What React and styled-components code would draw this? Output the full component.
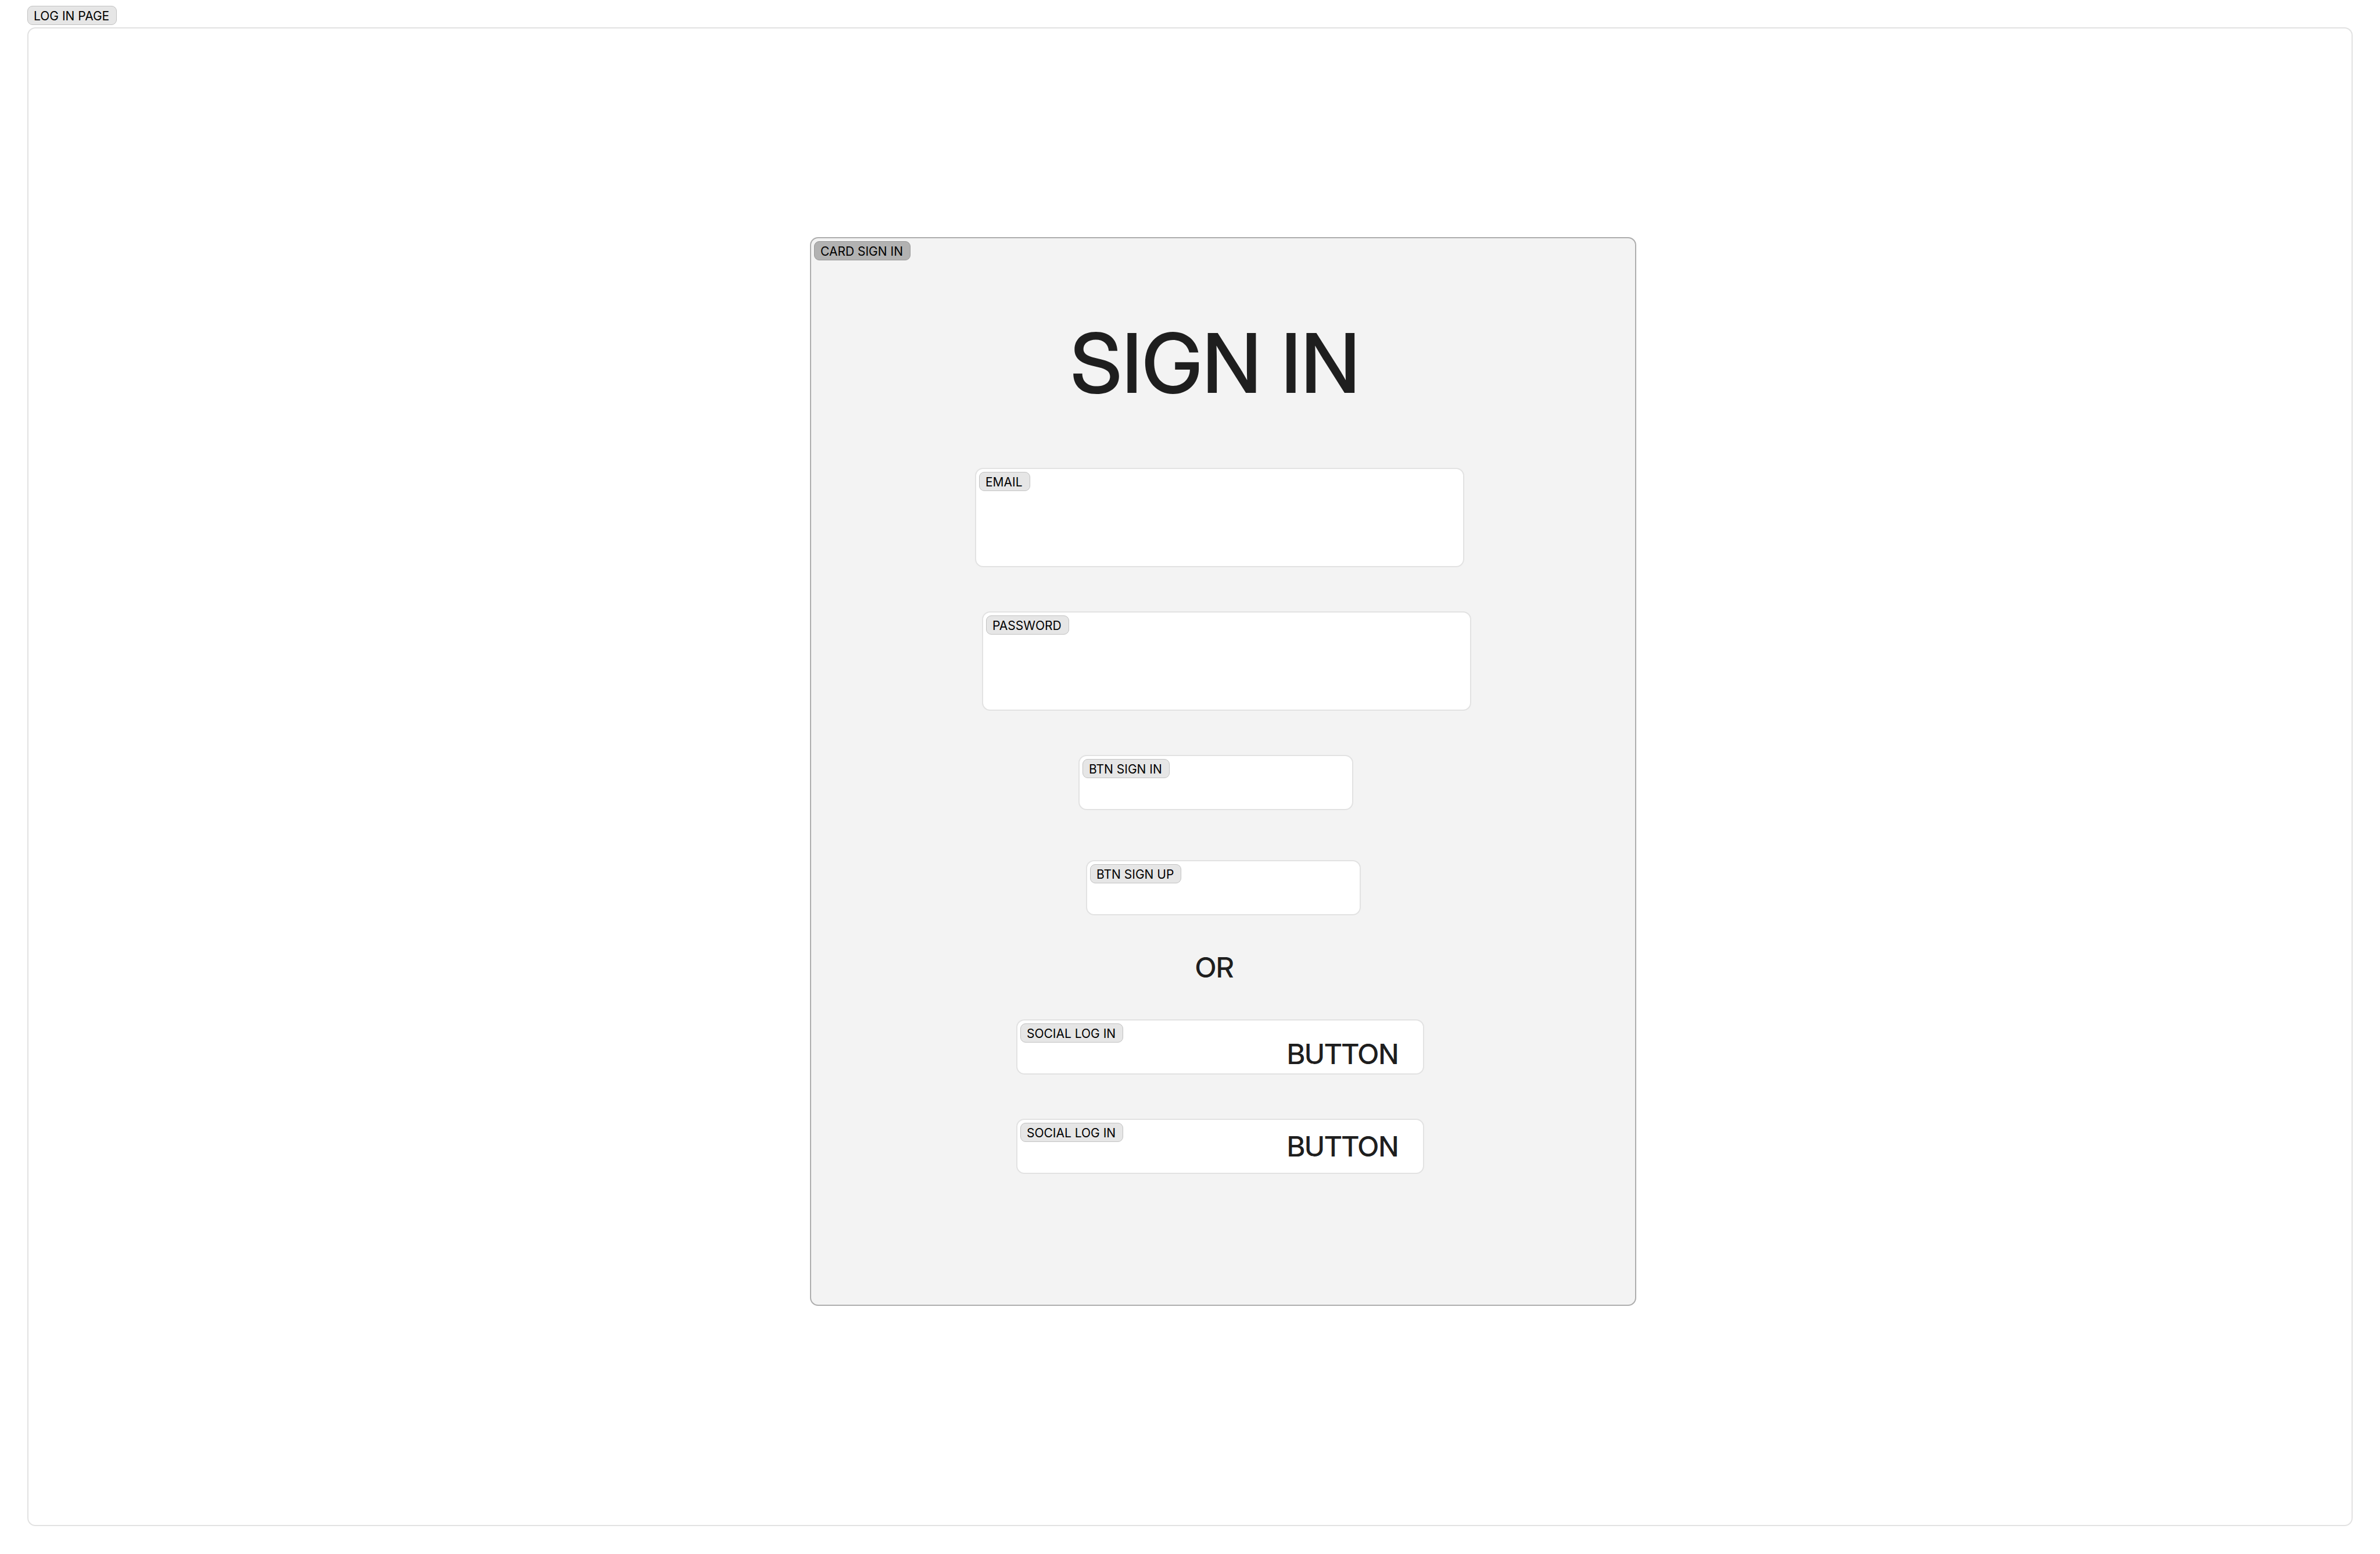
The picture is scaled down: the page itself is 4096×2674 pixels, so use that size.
import React from "react";
import styled, { createGlobalStyle } from "styled-components";

const GlobalStyle = createGlobalStyle`
  *, *::before, *::after { box-sizing: border-box; }
  body {
    margin: 0;
    background: #ffffff;
    color: #1e1e1e;
    font-family: Inter, "Liberation Sans", sans-serif;
  }
  button, input { font: inherit; color: inherit; }
`;

const Page = styled.main`
  min-height: 100vh;
  padding: 10px 47px 48px;
  display: flex;
  flex-direction: column;
  align-items: flex-start;
  gap: 4px;
`;

const Tag = styled.span`
  display: inline-block;
  flex: none;
  padding: 3px 12px 0 10px;
  border: 1px solid ${(p) => (p.$strong ? "#979797" : "#c2c2c2")};
  border-radius: 9px;
  background: ${(p) => (p.$strong ? "#b2b2b2" : "#e6e6e6")};
  color: #000000;
  font-size: 21px;
  font-weight: 400;
  line-height: 28px;
  white-space: nowrap;
`;

const Frame = styled.section`
  align-self: stretch;
  flex: 1;
  display: flex;
  justify-content: center;
  align-items: flex-start;
  padding: 359px 0 359px 114px;
  border: 2px solid #e2e2e2;
  border-radius: 14px;
`;

const Card = styled.form`
  width: 100%;
  max-width: 1422px;
  display: flex;
  flex-direction: column;
  align-items: flex-start;
  padding: 5px 5px 225px;
  border: 2px solid #adadad;
  border-radius: 14px;
  background: #f3f3f3;
`;

const Title = styled.h1`
  margin: 105px 0 110px;
  padding-left: 441px;
  font-family: "Inter Display", Inter, "Liberation Sans", sans-serif;
  font-variation-settings: "opsz" 32;
  font-size: 142px;
  font-weight: 500;
  line-height: 142px;
  white-space: nowrap;
`;

const Stack = styled.div`
  display: flex;
  flex-direction: column;
  align-items: flex-start;
  gap: ${(p) => p.$gap}px;
`;

const Field = styled.div`
  width: 842px;
  height: 171px;
  margin-left: ${(p) => p.$indent}px;
  display: flex;
  flex-direction: column;
  align-items: flex-start;
  padding: 5px;
  border: 2px solid #e2e2e2;
  border-radius: 14px;
  background: #ffffff;
`;

const Input = styled.input`
  width: 100%;
  flex: 1;
  padding: 0 10px;
  border: 0;
  outline: 0;
  background: transparent;
  font-size: 47px;
`;

const Button = styled.button`
  width: ${(p) => (p.$wide ? 702 : 473)}px;
  height: 95px;
  margin-left: ${(p) => p.$indent}px;
  display: flex;
  justify-content: space-between;
  align-items: flex-start;
  padding: 5px;
  border: 2px solid #e2e2e2;
  border-radius: 14px;
  background: #ffffff;
  cursor: pointer;
`;

const Caption = styled.span`
  align-self: ${(p) => p.$align};
  padding-right: 37px;
  font-family: "Inter Display", Inter, "Liberation Sans", sans-serif;
  font-variation-settings: "opsz" 24;
  font-size: 48px;
  font-weight: 500;
  line-height: 56px;
`;

const Divider = styled.p`
  margin: 62px 0 61px;
  padding-left: 656px;
  font-family: "Inter Display", Inter, "Liberation Sans", sans-serif;
  font-variation-settings: "opsz" 24;
  font-size: 48px;
  font-weight: 500;
  line-height: 56px;
`;

const socialButtons = [
  { id: "first", align: "flex-end" },
  { id: "second", align: "center" },
];

export default function App() {
  return (
    <>
      <GlobalStyle />
      <Page>
        <Tag>LOG IN PAGE</Tag>
        <Frame>
          <Card onSubmit={(event) => event.preventDefault()}>
            <Tag $strong>CARD SIGN IN</Tag>
            <Title>SIGN IN</Title>
            <Stack $gap={86}>
              <Stack $gap={76}>
                <Field $indent={277}>
                  <Tag as="label" htmlFor="email">EMAIL</Tag>
                  <Input id="email" type="email" autoComplete="email" />
                </Field>
                <Field $indent={289}>
                  <Tag as="label" htmlFor="password">PASSWORD</Tag>
                  <Input id="password" type="password" autoComplete="current-password" />
                </Field>
                <Button type="submit" $indent={455}>
                  <Tag>BTN SIGN IN</Tag>
                </Button>
              </Stack>
              <Button type="button" $indent={468}>
                <Tag>BTN SIGN UP</Tag>
              </Button>
            </Stack>
            <Divider>OR</Divider>
            <Stack $gap={76}>
              {socialButtons.map(({ id, align }) => (
                <Button key={id} type="button" $wide $indent={348}>
                  <Tag>SOCIAL LOG IN</Tag>
                  <Caption $align={align}>BUTTON</Caption>
                </Button>
              ))}
            </Stack>
          </Card>
        </Frame>
      </Page>
    </>
  );
}
